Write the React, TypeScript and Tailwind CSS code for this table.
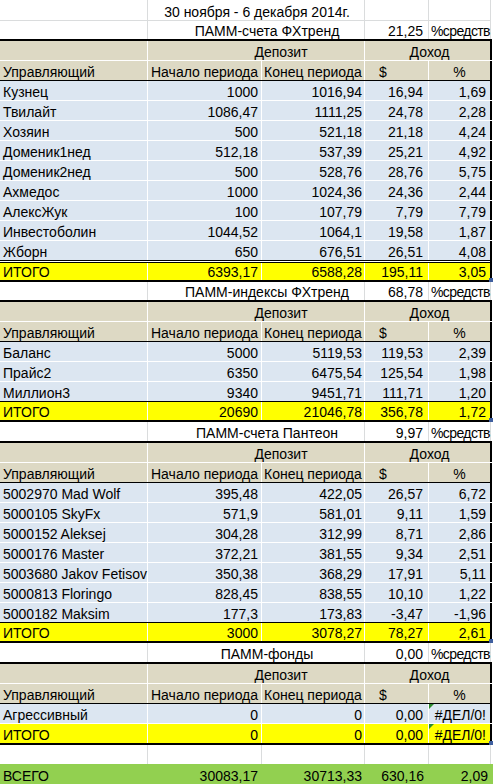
import React from "react";

const cell = "flex items-end leading-[16px] whitespace-nowrap shrink-0 h-full";

type RowProps = {
  className: string;
  a?: React.ReactNode;
  b?: React.ReactNode;
  c?: React.ReactNode;
  d?: React.ReactNode;
  e?: React.ReactNode;
  v: string;
  eExtra?: React.ReactNode;
};

function R({ className, a, b, c, d, e, v, eExtra }: RowProps) {
  return (
    <div className={`relative flex w-[492px] shrink-0 ${className}`}>
      <div className={`${cell} w-[148px] pl-[3px] border-r ${v}`}>{a}</div>
      <div className={`${cell} w-[114px] justify-end pr-[3px] border-r ${v}`}>{b}</div>
      <div className={`${cell} w-[103px] justify-end pr-[2px] border-r ${v}`}>{c}</div>
      <div className={`${cell} w-[64px] justify-end pr-[5px] border-r ${v}`}>{d}</div>
      <div className={`${cell} relative w-[63px] justify-end pr-[4px] border-r-2 border-black`}>
        {e}
        {eExtra}
      </div>
    </div>
  );
}

function TitleRow({ label, value, h }: { label: string; value: string; h: string }) {
  return (
    <div className={`flex w-[491px] shrink-0 bg-white ${h}`}>
      <div className={`${cell} w-[148px] border-r border-[#dadcdd]`}></div>
      <div className={`${cell} w-[217px] justify-center pl-[22px] border-r border-[#dadcdd]`}>{label}</div>
      <div className={`${cell} w-[64px] justify-end pr-[5px] border-r border-[#dadcdd]`}>{value}</div>
      <div className={`${cell} w-[62px] pl-[2px] tracking-[-0.6px] border-r border-[#dadcdd]`}>%средств</div>
    </div>
  );
}

function TanRow() {
  return (
    <div className="flex w-[492px] shrink-0 h-[22px] bg-[#ddd9c4] border-t-2 border-t-black border-b border-b-white">
      <div className={`${cell} w-[148px] border-r border-white`}></div>
      <div className={`${cell} w-[217px] justify-center pl-[50px] border-r border-white`}>Депозит</div>
      <div className={`${cell} w-[127px] justify-center pl-[4px] border-r-2 border-black`}>Доход</div>
    </div>
  );
}

function HeaderRow() {
  return (
    <div className="flex w-[492px] shrink-0 h-[20px] bg-[#ddd9c4] border-b border-b-black">
      <div className={`${cell} w-[148px] pl-[3px] border-r border-white`}>Управляющий</div>
      <div className={`${cell} w-[114px] pl-[3px] border-r border-white`}>Начало периода</div>
      <div className={`${cell} w-[103px] pl-[2px] border-r border-white`}>Конец периода</div>
      <div className={`${cell} w-[64px] pl-[14px] border-r border-white`}>$</div>
      <div className={`${cell} w-[63px] justify-center border-r-2 border-black`}>%</div>
    </div>
  );
}

type D = [string, string, string, string, string];

function DataRows({ rows }: { rows: D[] }) {
  return (
    <>
      {rows.map((r, i) => (
        <R
          key={i}
          className={
            i === rows.length - 1
              ? "h-[19px] bg-[#dce6f1]"
              : "h-[20px] bg-[#dce6f1] border-b border-b-white"
          }
          v="border-white"
          a={r[0]}
          b={r[1]}
          c={r[2]}
          d={r[3]}
          e={r[4]}
        />
      ))}
    </>
  );
}

const Handle = () => (
  <span className="absolute right-[-3px] bottom-[-2px] w-[4px] h-[4px] bg-[#3f5f9f]" />
);

const ErrMark = () => (
  <span className="absolute left-0 top-0 w-0 h-0 border-t-[5px] border-t-[#2e8b2e] border-r-[5px] border-r-transparent" />
);

function TotalRow({ r, top, h, extra }: { r: D; top: string; h: string; extra?: React.ReactNode }) {
  return (
    <R
      className={`${h} bg-[#ffff00] ${top} border-b-2 border-b-black`}
      v="border-white"
      a={r[0]}
      b={r[1]}
      c={r[2]}
      d={r[3]}
      e={r[4]}
      eExtra={
        <>
          {extra}
          <Handle />
        </>
      }
    />
  );
}

const sec1: D[] = [
  ["Кузнец", "1000", "1016,94", "16,94", "1,69"],
  ["Твилайт", "1086,47", "1111,25", "24,78", "2,28"],
  ["Хозяин", "500", "521,18", "21,18", "4,24"],
  ["Доменик1нед", "512,18", "537,39", "25,21", "4,92"],
  ["Доменик2нед", "500", "528,76", "28,76", "5,75"],
  ["Ахмедос", "1000", "1024,36", "24,36", "2,44"],
  ["АлексЖук", "100", "107,79", "7,79", "7,79"],
  ["Инвестоболин", "1044,52", "1064,1", "19,58", "1,87"],
  ["Жборн", "650", "676,51", "26,51", "4,08"],
];

const sec2: D[] = [
  ["Баланс", "5000", "5119,53", "119,53", "2,39"],
  ["Прайс2", "6350", "6475,54", "125,54", "1,98"],
  ["Миллион3", "9340", "9451,71", "111,71", "1,20"],
];

const sec3: D[] = [
  ["5002970 Mad Wolf", "395,48", "422,05", "26,57", "6,72"],
  ["5000105 SkyFx", "571,9", "581,01", "9,11", "1,59"],
  ["5000152 Aleksej", "304,28", "312,99", "8,71", "2,86"],
  ["5000176 Master", "372,21", "381,55", "9,34", "2,51"],
  ["5003680 Jakov Fetisov", "350,38", "368,29", "17,91", "5,11"],
  ["5000813 Floringo", "828,45", "838,55", "10,10", "1,22"],
  ["5000182 Maksim", "177,3", "173,83", "-3,47", "-1,96"],
];

export default function App() {
  return (
    <div className="w-[493px] h-[784px] overflow-hidden bg-white text-[14px] text-black font-['Liberation_Sans',Arial,sans-serif] flex flex-col">
      {/* Title row */}
      <div className="flex w-[491px] shrink-0 h-[21px] bg-white border-b border-b-[#dadcdd]">
        <div className={`${cell} w-[148px] border-r border-[#dadcdd]`}></div>
        <div className={`${cell} w-[217px] justify-center pl-[2px] border-r border-[#dadcdd]`}>30 ноября - 6 декабря 2014г.</div>
        <div className={`${cell} w-[64px] border-r border-[#dadcdd]`}></div>
        <div className={`${cell} w-[62px] border-r border-[#dadcdd]`}></div>
      </div>

      {/* Section 1 */}
      <TitleRow label="ПАММ-счета ФХтренд" value="21,25" h="h-[18px]" />
      <TanRow />
      <HeaderRow />
      <DataRows rows={sec1} />
      <div className="w-[492px] shrink-0 h-[3px] border-y border-black bg-white border-r-2" />
      <TotalRow r={["ИТОГО", "6393,17", "6588,28", "195,11", "3,05"]} top="" h="h-[19px]" />

      {/* Section 2 */}
      <TitleRow label="ПАММ-индексы ФХтренд" value="68,78" h="h-[18px]" />
      <TanRow />
      <HeaderRow />
      <DataRows rows={sec2} />
      <TotalRow r={["ИТОГО", "20690", "21046,78", "356,78", "1,72"]} top="border-t border-t-black" h="h-[21px]" />

      {/* Section 3 */}
      <TitleRow label="ПАММ-счета Пантеон" value="9,97" h="h-[19px]" />
      <TanRow />
      <HeaderRow />
      <DataRows rows={sec3} />
      <TotalRow r={["ИТОГО", "3000", "3078,27", "78,27", "2,61"]} top="border-t border-t-black" h="h-[21px]" />

      {/* Section 4 */}
      <TitleRow label="ПАММ-фонды" value="0,00" h="h-[19px]" />
      <TanRow />
      <HeaderRow />
      <R
        className="h-[20px] bg-[#dce6f1] border-b border-b-white"
        v="border-white"
        a="Агрессивный"
        b="0"
        c="0"
        d="0,00"
        e="#ДЕЛ/0!"
        eExtra={<ErrMark />}
      />
      <TotalRow r={["ИТОГО", "0", "0", "0,00", "#ДЕЛ/0!"]} top="" h="h-[21px]" extra={<ErrMark />} />

      {/* Empty row */}
      <div className="flex w-[491px] shrink-0 h-[19px] bg-white">
        <div className={`${cell} w-[148px] border-r border-[#dadcdd]`}></div>
        <div className={`${cell} w-[114px] border-r border-[#dadcdd]`}></div>
        <div className={`${cell} w-[103px] border-r border-[#dadcdd]`}></div>
        <div className={`${cell} w-[64px] border-r border-[#dadcdd]`}></div>
        <div className={`${cell} w-[62px] border-r border-[#dadcdd]`}></div>
      </div>

      {/* Total */}
      <div className="flex w-[493px] shrink-0 h-[20px] bg-[#92d050]">
        <div className={`${cell} w-[148px] pl-[3px]`}>ВСЕГО</div>
        <div className={`${cell} w-[114px] justify-end pr-[4px]`}>30083,17</div>
        <div className={`${cell} w-[103px] justify-end pr-[3px]`}>30713,33</div>
        <div className={`${cell} w-[64px] justify-end pr-[5px]`}>630,16</div>
        <div className={`${cell} w-[63px] justify-end pr-[4px]`}>2,09</div>
      </div>
    </div>
  );
}
